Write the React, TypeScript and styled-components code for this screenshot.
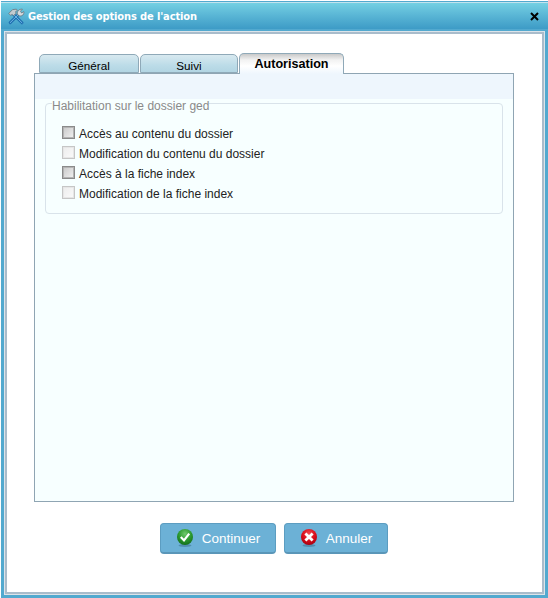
import React from "react";
import styled, { createGlobalStyle } from "styled-components";

const GlobalStyle = createGlobalStyle`
  html, body {
    margin: 0;
    padding: 0;
    background: #ffffff;
  }
  body {
    font-family: "Liberation Sans", Arial, sans-serif;
  }
`;

const tabs = [
  { label: "Général", width: 100 },
  { label: "Suivi", width: 98 },
  { label: "Autorisation", width: 105, active: true },
];

const permissions = [
  { label: "Accès au contenu du dossier", enabled: true },
  { label: "Modification du contenu du dossier", enabled: false },
  { label: "Accès à la fiche index", enabled: true },
  { label: "Modification de la fiche index", enabled: false },
];

const ToolsIcon = () => (
  <svg width="17" height="17" viewBox="0 0 17 17">
    {/* handles */}
    <path d="M10.5 6.5 L2.2 14.6" stroke="#1f6fb0" strokeWidth="3" strokeLinecap="round" />
    <path d="M5.5 6.5 L14 14.8" stroke="#1f6fb0" strokeWidth="3" strokeLinecap="round" />
    <path d="M10.5 6.5 L2.2 14.6" stroke="#6fb6e6" strokeWidth="1" strokeLinecap="round" />
    <path d="M5.5 6.5 L14 14.8" stroke="#6fb6e6" strokeWidth="1" strokeLinecap="round" />
    {/* hammer head */}
    <path d="M0.8 5.4 L4.6 1.6 L8.4 1.2 L9.4 2.4 L7.6 3.6 L8 5.2 L5.6 7.8 L4.2 6.4 L2.6 7.4 Z" fill="#c4cbd0" stroke="#5f6a73" strokeWidth="0.7" />
    {/* wrench head */}
    <path d="M9.4 6.4 C8.8 3.4 11 0.8 14.4 1.2 L12.4 3.2 L13.6 5 L15.8 3.6 C16.4 6.4 14 8.6 11.4 7.8 Z" fill="#d6dbdf" stroke="#5f6a73" strokeWidth="0.7" />
  </svg>
);

const CloseIcon = () => (
  <svg width="9" height="9" viewBox="0 0 9 9">
    <path d="M1 1 L8 8 M8 1 L1 8" stroke="#000000" strokeWidth="2" />
  </svg>
);

const ConfirmIcon = () => (
  <svg width="18" height="20" viewBox="0 0 18 20">
    <defs>
      <radialGradient id="greenBall" cx="50%" cy="30%" r="70%">
        <stop offset="0%" stopColor="#6fc86c" />
        <stop offset="55%" stopColor="#2c9a2f" />
        <stop offset="100%" stopColor="#136f1a" />
      </radialGradient>
    </defs>
    <ellipse cx="9" cy="17.5" rx="6.5" ry="1.4" fill="#3d6f8f" opacity="0.55" />
    <circle cx="9" cy="9" r="8" fill="url(#greenBall)" />
    <path d="M4.8 9 L8 12.4 L13.2 5.6" fill="none" stroke="#ffffff" strokeWidth="2.2" />
  </svg>
);

const CancelIcon = () => (
  <svg width="18" height="20" viewBox="0 0 18 20">
    <defs>
      <radialGradient id="redBall" cx="50%" cy="30%" r="70%">
        <stop offset="0%" stopColor="#ee4a52" />
        <stop offset="55%" stopColor="#dc0f1c" />
        <stop offset="100%" stopColor="#a80010" />
      </radialGradient>
    </defs>
    <ellipse cx="9" cy="17.5" rx="6.5" ry="1.4" fill="#3d6f8f" opacity="0.55" />
    <circle cx="9" cy="9" r="8" fill="url(#redBall)" />
    <path d="M5.4 5.4 L12.6 12.6 M12.6 5.4 L5.4 12.6" fill="none" stroke="#ffffff" strokeWidth="2.8" />
  </svg>
);

const App: React.FC = () => {
  return (
    <>
      <GlobalStyle />
      <StyledWindow>
        <StyledTitleBar>
          <ToolsIcon />
          <StyledTitle>Gestion des options de l'action</StyledTitle>
          <StyledClose>
            <CloseIcon />
          </StyledClose>
        </StyledTitleBar>
        <StyledBody>
          <StyledTabs>
            {tabs.map((tab) => (
              <StyledTab key={tab.label} $width={tab.width} $active={tab.active}>
                {tab.label}
              </StyledTab>
            ))}
          </StyledTabs>
          <StyledPanel>
            <StyledFieldset>
              <StyledLegend>Habilitation sur le dossier ged</StyledLegend>
              {permissions.map((permission) => (
                <StyledRow key={permission.label}>
                  <StyledCheck $enabled={permission.enabled} />
                  <span>{permission.label}</span>
                </StyledRow>
              ))}
            </StyledFieldset>
          </StyledPanel>
          <StyledActions>
            <StyledButton $width={116}>
              <ConfirmIcon />
              <span>Continuer</span>
            </StyledButton>
            <StyledButton $width={104}>
              <CancelIcon />
              <span>Annuler</span>
            </StyledButton>
          </StyledActions>
        </StyledBody>
      </StyledWindow>
    </>
  );
};

const StyledWindow = styled.div`
  box-sizing: border-box;
  width: 548px;
  height: 598px;
  display: flex;
  flex-direction: column;
  background: #52a9cf;
  border-top: 1px solid #ffffff;
  border-left: 1px solid #ffffff;
  padding: 0 4px 4px 4px;
`;

const StyledTitleBar = styled.div`
  flex: none;
  height: 26px;
  margin: 1px -4px 0;
  padding: 0 9px 0 7px;
  display: flex;
  align-items: center;
  gap: 3px;
  border-top: 1px solid #c3e3ee;
  background: linear-gradient(to bottom, #74d0e3 0%, #5bb7d6 45%, #3d9bc6 100%);
`;

const StyledTitle = styled.span`
  flex: 1;
  color: #ffffff;
  font-size: 11px;
  font-weight: bold;
  font-family: "DejaVu Sans", Verdana, sans-serif;
  font-stretch: condensed;
  letter-spacing: -0.12px;
`;

const StyledClose = styled.span`
  display: flex;
`;

const StyledBody = styled.div`
  flex: 1;
  box-sizing: border-box;
  display: flex;
  flex-direction: column;
  margin-top: 3px;
  padding: 19px 28px 0 27px;
  background: #ffffff;
  border: 2px solid #a9bccb;
  outline: 1px solid #dce4ea;
`;

const StyledTabs = styled.div`
  flex: none;
  display: flex;
  align-items: flex-end;
  gap: 1px;
  height: 20px;
  padding-left: 5px;
`;

const StyledTab = styled.div<{ $width: number; $active?: boolean }>`
  box-sizing: border-box;
  width: ${(p) => p.$width}px;
  height: ${(p) => (p.$active ? 21 : 19)}px;
  margin-bottom: ${(p) => (p.$active ? -1 : 0)}px;
  position: relative;
  border: 1px solid #8fa9b8;
  border-bottom: ${(p) => (p.$active ? "none" : "1px solid #8fa9b8")};
  border-radius: 5px 5px 0 0;
  text-align: center;
  font-size: ${(p) => (p.$active ? 12.6 : 11.7)}px;
  line-height: ${(p) => (p.$active ? 20 : 22)}px;
  color: #000000;
  font-weight: ${(p) => (p.$active ? "bold" : "normal")};
  background: ${(p) =>
    p.$active
      ? "linear-gradient(to bottom, #c9c9c9 0%, #f2f2f2 30%, #ffffff 60%, #eef6fd 100%)"
      : "linear-gradient(to bottom, #d8e9f0 0%, #bcdce8 60%, #b2d5e3 100%)"};
`;

const StyledPanel = styled.div`
  flex: none;
  box-sizing: border-box;
  height: 429px;
  padding: 29px 10px 0;
  border: 1px solid #8fa5b3;
  background: linear-gradient(to bottom, #eef6fd 0, #eef6fd 25px, #f7ffff 25px, #f7ffff 100%);
`;

const StyledFieldset = styled.div`
  box-sizing: border-box;
  height: 111px;
  position: relative;
  padding: 20px 0 0 16px;
  border: 1px solid #d9e3ea;
  border-radius: 4px;
`;

const StyledLegend = styled.div`
  position: absolute;
  top: -4px;
  left: 6px;
  font-size: 12px;
  line-height: 13px;
  color: #8a8a8a;
  background: #f7ffff;
`;

const StyledRow = styled.div`
  height: 20px;
  display: flex;
  align-items: center;
  gap: 4px;
  font-size: 12px;
  color: #222222;
`;

const StyledCheck = styled.span<{ $enabled: boolean }>`
  box-sizing: border-box;
  width: 13px;
  height: 13px;
  margin-bottom: 4px;
  border: 1px solid ${(p) => (p.$enabled ? "#8a8a8a" : "#c6c6c6")};
  background: ${(p) =>
    p.$enabled
      ? "linear-gradient(135deg, #c8c8c8 0%, #f2f2f2 100%)"
      : "linear-gradient(135deg, #ececec 0%, #fbfbfb 100%)"};
  box-shadow: inset 0 0 0 1px ${(p) => (p.$enabled ? "#b4b4b4" : "#e6e6e6")};
`;

const StyledActions = styled.div`
  display: flex;
  justify-content: center;
  gap: 8px;
  margin-top: 21px;
`;

const StyledButton = styled.div<{ $width: number }>`
  box-sizing: border-box;
  width: ${(p) => p.$width}px;
  height: 31px;
  display: flex;
  align-items: center;
  justify-content: center;
  gap: 8px;
  background: #6cb1d6;
  border: 1px solid #5c9dc1;
  border-bottom: 2px solid #5a96b8;
  border-radius: 4px;
  color: #ffffff;
  font-size: 13.5px;
`;

export default App;
